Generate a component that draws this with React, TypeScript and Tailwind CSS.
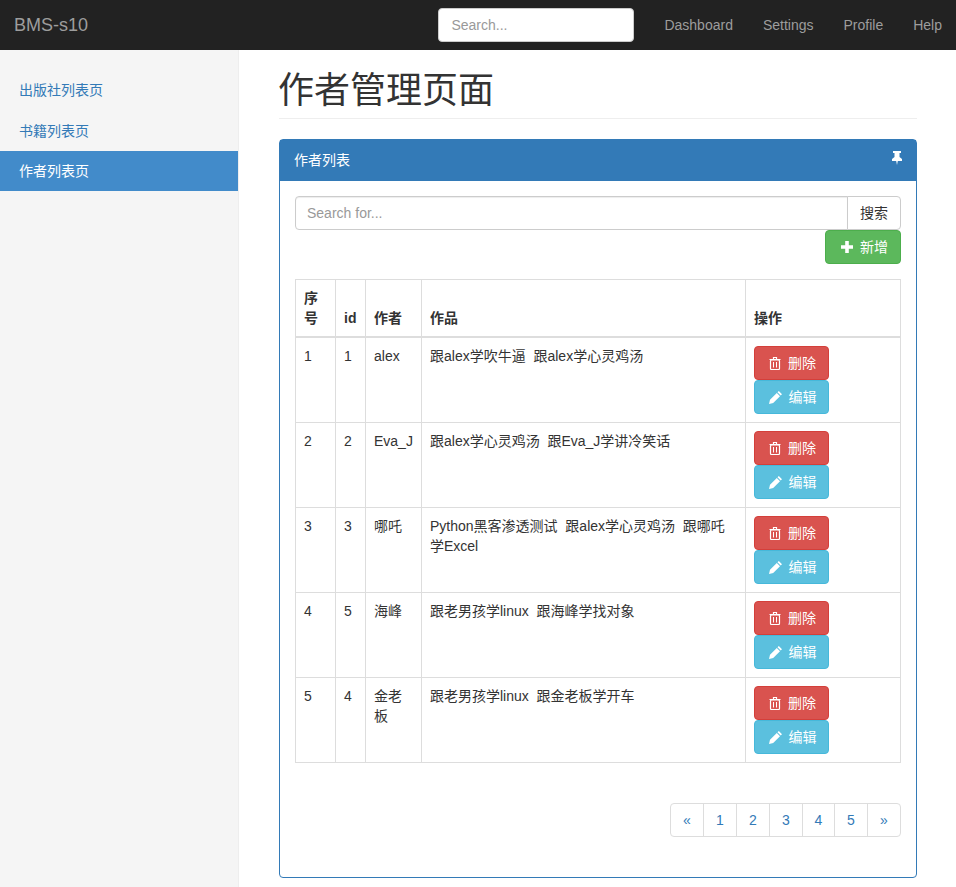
import React from "react";

const rows = [
  { no: 1, id: 1, name: "alex", works: ["跟alex学吹牛逼", "跟alex学心灵鸡汤"] },
  { no: 2, id: 2, name: "Eva_J", works: ["跟alex学心灵鸡汤", "跟Eva_J学讲冷笑话"] },
  { no: 3, id: 3, name: "哪吒", works: ["Python黑客渗透测试", "跟alex学心灵鸡汤", "跟哪吒学Excel"] },
  { no: 4, id: 5, name: "海峰", works: ["跟老男孩学linux", "跟海峰学找对象"] },
  { no: 5, id: 4, name: "金老板", works: ["跟老男孩学linux", "跟金老板学开车"] },
];

const pages = [
  { label: "«", w: "w-[34px]" },
  { label: "1", w: "w-[34px]" },
  { label: "2", w: "w-[34px]" },
  { label: "3", w: "w-[34px]" },
  { label: "4", w: "w-[33px]" },
  { label: "5", w: "w-[34px]" },
  { label: "»", w: "w-[34px]" },
];

function PinIcon() {
  return (
    <svg width="10" height="14" viewBox="0 0 10 14" fill="currentColor">
      <path d="M1 0h8v2H7.500v4L10 8v2H5.800L5 14l-.8-4H0V8l2.500-2V2H1z" />
    </svg>
  );
}

function PlusIcon() {
  return (
    <svg width="12" height="12" viewBox="0 0 12 12" fill="currentColor">
      <path d="M4.200 0h3.600v4.200H12v3.600H7.800V12H4.200V7.800H0V4.200h4.200z" />
    </svg>
  );
}

function TrashIcon() {
  return (
    <svg width="12" height="13" viewBox="0 0 12 13" fill="none" stroke="currentColor">
      <path d="M4.500 2V.5h3V2M.5 2.500h11" strokeWidth="1.200" />
      <rect x="1.500" y="3" width="9" height="9.500" rx="1" strokeWidth="1.200" />
      <path d="M4.500 5v5.500M7.500 5v5.500" />
    </svg>
  );
}

function PencilIcon() {
  return (
    <svg width="13" height="13" viewBox="0 0 13 13" fill="currentColor">
      <path d="M9.800 0L13 3.200 11.700 4.500 8.500 1.300zM7.800 2L11 5.200 4.200 12 0 13l1-4.200z" />
    </svg>
  );
}

function ActionButton({ kind }: { kind: "del" | "edit" }) {
  const del = kind === "del";
  return (
    <button
      className={
        del
          ? "flex h-[34px] w-[75px] items-center justify-center gap-[7px] rounded border border-[#d43f3a] bg-[#d9534f] pl-[2px] text-white"
          : "flex h-[34px] w-[75px] items-center justify-center gap-[7px] rounded border border-[#46b8da] bg-[#5bc0de] pl-[2px] text-white"
      }
    >
      {del ? <TrashIcon /> : <PencilIcon />}
      <span>{del ? "删除" : "编辑"}</span>
    </button>
  );
}

export default function App() {
  return (
    <div className="flex h-screen flex-col overflow-hidden bg-white font-['Liberation_Sans','Noto_Sans_CJK_SC',sans-serif] text-sm leading-5 text-[#333]">
      <nav className="flex h-[50px] shrink-0 items-center bg-[#222] pl-[14px]">
        <a className="text-lg text-[#9d9d9d]">BMS-s10</a>
        <div className="ml-auto flex items-center">
          <input
            placeholder="Search..."
            className="mr-[15px] h-[34px] w-[196px] rounded border border-[#ccc] bg-white px-3 text-sm placeholder:text-[#999]"
          />
          <a className="px-[15px] text-[#9d9d9d]">Dashboard</a>
          <a className="px-[15px] text-[#9d9d9d]">Settings</a>
          <a className="px-[15px] text-[#9d9d9d]">Profile</a>
          <a className="pl-[15px] pr-[14px] text-[#9d9d9d]">Help</a>
        </div>
      </nav>

      <div className="flex min-h-0 flex-1">
        <aside className="w-[239px] shrink-0 border-r border-[#eee] bg-[#f5f5f5] pt-5">
          <a className="block h-10 py-[10px] pl-[19px] text-[#337ab7]">出版社列表页</a>
          <a className="mt-px block h-10 py-[10px] pl-[19px] text-[#337ab7]">书籍列表页</a>
          <a className="block h-10 bg-[#428bca] py-[10px] pl-[19px] text-white">作者列表页</a>
        </aside>

        <main className="min-w-0 flex-1 pl-10 pr-[39px]">
          <div className="mt-5 mb-5 border-b border-[#eee] pb-[6px]">
            <h1 className="-ml-px text-[36px] leading-[42px] font-normal">作者管理页面</h1>
          </div>

          <section className="h-[739px] rounded border border-[#337ab7]">
            <div className="flex h-[41px] items-start justify-between bg-[#337ab7] py-[10px] pl-[14px] pr-[14px] text-white">
              <span>作者列表</span>
              <span className="block pt-px">
                <PinIcon />
              </span>
            </div>

            <div className="px-[15px] pt-[15px]">
              <div className="flex h-[34px]">
                <input
                  placeholder="Search for..."
                  className="h-[34px] min-w-0 flex-1 rounded-l border border-[#ccc] pl-[11px] pr-3 text-sm shadow-[inset_0_1px_1px_rgba(0,0,0,0.075)] placeholder:text-[#999]"
                />
                <button className="-ml-px h-[34px] w-[54px] rounded-r border border-[#ccc] bg-white">搜索</button>
              </div>
              <div className="flex justify-end">
                <button className="flex h-[34px] w-[76px] items-center justify-center gap-[7px] rounded border border-[#4cae4c] bg-[#5cb85c] pl-[3px] text-white">
                  <PlusIcon />
                  <span>新增</span>
                </button>
              </div>

              <table className="mt-[15px] w-[605px] table-fixed border-collapse border border-[#ddd]">
                <colgroup>
                  <col className="w-10" />
                  <col className="w-[30px]" />
                  <col className="w-14" />
                  <col className="w-[324px]" />
                  <col className="w-[155px]" />
                </colgroup>
                <thead>
                  <tr className="border-b-2 border-[#ddd]">
                    {["序号", "id", "作者", "作品", "操作"].map((h) => (
                      <th key={h} className="border-x border-[#ddd] p-2 text-left align-bottom font-bold">
                        {h}
                      </th>
                    ))}
                  </tr>
                </thead>
                <tbody>
                  {rows.map((r) => (
                    <tr key={r.no} className="border-t border-[#ddd]">
                      <td className="border border-[#ddd] p-2 align-top">{r.no}</td>
                      <td className="border border-[#ddd] p-2 align-top">{r.id}</td>
                      <td className="border border-[#ddd] p-2 align-top">{r.name}</td>
                      <td className="border border-[#ddd] p-2 align-top">
                        {r.works.join("\u00a0 ")}
                      </td>
                      <td className="border border-[#ddd] p-2 align-top">
                        <ActionButton kind="del" />
                        <ActionButton kind="edit" />
                      </td>
                    </tr>
                  ))}
                </tbody>
              </table>

              <div className="mt-10 flex justify-end">
                {pages.map((p, i) => (
                  <a
                    key={p.label}
                    className={
                      (i === 0
                        ? "rounded-l "
                        : i === pages.length - 1
                          ? "-ml-px rounded-r "
                          : "-ml-px ") +
                      p.w +
                      " flex h-[34px] items-center justify-center border border-[#ddd] text-[#337ab7]"
                    }
                  >
                    {p.label}
                  </a>
                ))}
              </div>
            </div>
          </section>
        </main>
      </div>
    </div>
  );
}
